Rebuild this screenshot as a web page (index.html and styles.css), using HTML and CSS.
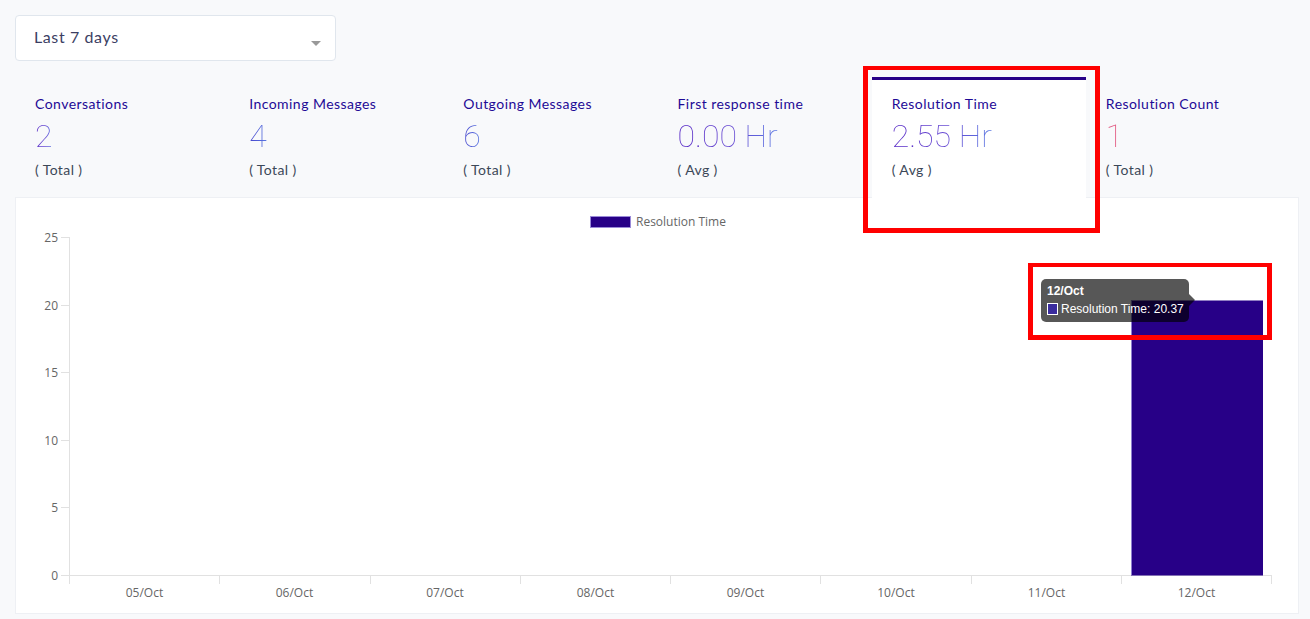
FILE: index.html
```html
<!DOCTYPE html>
<html lang="en">
<head>
<meta charset="utf-8">
<title>Reports</title>
<link rel="stylesheet" href="styles.css">
</head>
<body>
<div class="page">
  <div class="select">
    <span class="select-text">Last 7 days</span>
    <span class="caret"></span>
  </div>

  <div class="metrics">
    <div class="card">
      <div class="card-title">Conversations</div>
      <div class="card-value v-purple">2</div>
      <div class="card-sub">( Total )</div>
    </div>
    <div class="card">
      <div class="card-title">Incoming Messages</div>
      <div class="card-value v-blue">4</div>
      <div class="card-sub">( Total )</div>
    </div>
    <div class="card">
      <div class="card-title">Outgoing Messages</div>
      <div class="card-value v-blue">6</div>
      <div class="card-sub">( Total )</div>
    </div>
    <div class="card">
      <div class="card-title">First response time</div>
      <div class="card-value v-purple">0.00 Hr</div>
      <div class="card-sub">( Avg )</div>
    </div>
    <div class="card active">
      <div class="card-title">Resolution Time</div>
      <div class="card-value v-purple">2.55 Hr</div>
      <div class="card-sub">( Avg )</div>
    </div>
    <div class="card">
      <div class="card-title">Resolution Count</div>
      <div class="card-value v-pink">1</div>
      <div class="card-sub">( Total )</div>
    </div>
  </div>

  <div class="chart-panel">
    <svg class="chart" width="1284" height="417" viewBox="15 197 1284 417" xmlns="http://www.w3.org/2000/svg">
      <!-- legend -->
      <rect x="590.5" y="216.5" width="40" height="11" fill="#270087" stroke="#9a8ad8" stroke-width="1"/>
      <text x="636" y="226" class="legend-text">Resolution Time</text>

      <!-- y axis -->
      <line x1="69.5" y1="237" x2="69.5" y2="584" class="axis"/>
      <line x1="61" y1="237.5" x2="69" y2="237.5" class="axis"/>
      <line x1="61" y1="305.5" x2="69" y2="305.5" class="axis"/>
      <line x1="61" y1="372.5" x2="69" y2="372.5" class="axis"/>
      <line x1="61" y1="440.5" x2="69" y2="440.5" class="axis"/>
      <line x1="61" y1="507.5" x2="69" y2="507.5" class="axis"/>
      <line x1="61" y1="575.5" x2="69" y2="575.5" class="axis"/>
      <text x="58" y="241.5" class="tick">25</text>
      <text x="58" y="309.5" class="tick">20</text>
      <text x="58" y="376.5" class="tick">15</text>
      <text x="58" y="444.5" class="tick">10</text>
      <text x="58" y="511.5" class="tick">5</text>
      <text x="58" y="579.5" class="tick">0</text>

      <!-- x axis -->
      <line x1="69" y1="575.5" x2="1271" y2="575.5" class="axis"/>
      <line x1="219.5" y1="575" x2="219.5" y2="584" class="axis"/>
      <line x1="370.5" y1="575" x2="370.5" y2="584" class="axis"/>
      <line x1="520.5" y1="575" x2="520.5" y2="584" class="axis"/>
      <line x1="670.5" y1="575" x2="670.5" y2="584" class="axis"/>
      <line x1="820.5" y1="575" x2="820.5" y2="584" class="axis"/>
      <line x1="971.5" y1="575" x2="971.5" y2="584" class="axis"/>
      <line x1="1121.5" y1="575" x2="1121.5" y2="584" class="axis"/>
      <line x1="1271.5" y1="575" x2="1271.5" y2="584" class="axis"/>
      <text x="144.5" y="596.5" class="xtick">05/Oct</text>
      <text x="294.5" y="596.5" class="xtick">06/Oct</text>
      <text x="445" y="596.5" class="xtick">07/Oct</text>
      <text x="595.5" y="596.5" class="xtick">08/Oct</text>
      <text x="745.5" y="596.5" class="xtick">09/Oct</text>
      <text x="896" y="596.5" class="xtick">10/Oct</text>
      <text x="1046.5" y="596.5" class="xtick">11/Oct</text>
      <text x="1196.5" y="596.5" class="xtick">12/Oct</text>

      <!-- bar -->
      <rect x="1131" y="300.5" width="132" height="275" fill="#270087"/>
      <line x1="1131.5" y1="300.5" x2="1131.5" y2="575" stroke="#8f80d0" stroke-width="1"/>

      <!-- tooltip -->
      <rect x="1041" y="279" width="148" height="43" rx="5" ry="5" fill="rgba(0,0,0,0.66)"/>
      <polygon points="1189,294 1195,300 1189,306" fill="rgba(0,0,0,0.66)"/>
      <text x="1047" y="295" class="tip-title">12/Oct</text>
      <rect x="1047.5" y="303.5" width="10" height="11" fill="#3a2c9e" stroke="#ffffff" stroke-width="1"/>
      <text x="1061" y="313" class="tip-body">Resolution Time: 20.37</text>
    </svg>
  </div>

  <div class="mark mark-card"></div>
  <div class="mark mark-tip"></div>
</div>
</body>
</html>
```

FILE: styles.css
```css
html, body {
  margin: 0;
  padding: 0;
  background: #f8f9fb;
}

body {
  font-family: "Lato", "Open Sans", sans-serif;
  color: #3c4858;
}

.page {
  position: relative;
  width: 1284px;
  padding: 15px 11px 0 15px;
}

.select {
  box-sizing: border-box;
  width: 321px;
  height: 46px;
  background: #ffffff;
  border: 1px solid #e0e6ed;
  border-radius: 4px;
  display: flex;
  align-items: center;
  justify-content: space-between;
  padding: 0 14px 0 18px;
}

.select-text {
  font-size: 16px;
  letter-spacing: 0.6px;
  color: #3b3e63;
  margin-top: -3px;
}

.caret {
  width: 0;
  height: 0;
  border-left: 5px solid transparent;
  border-right: 5px solid transparent;
  border-top: 5px solid #999999;
  margin-top: 10px;
}

.metrics {
  display: flex;
  width: 1285px;
  margin-top: 16px;
}

.card {
  box-sizing: border-box;
  flex: 1 1 0;
  height: 120px;
  border-top: 3px solid transparent;
  padding: 15px 20px 0 20px;
}

.card.active {
  background: #ffffff;
  border-top-color: #270087;
  position: relative;
  z-index: 1;
  margin-bottom: -1px;
  height: 121px;
}

.card-title {
  font-size: 14px;
  line-height: 18px;
  letter-spacing: 0.45px;
  color: #1e0a96;
}

.card-value {
  font-family: "Roboto", "Lato", sans-serif;
  font-size: 32px;
  line-height: 40px;
  font-weight: 100;
  margin-top: 3px;
  display: inline-block;
  -webkit-background-clip: text;
  background-clip: text;
  color: transparent;
}

.v-purple {
  background-image: linear-gradient(90deg, #5222c4 0%, #6548d2 55%, #5a78e2 100%);
}

.v-blue {
  background-image: linear-gradient(90deg, #4644cc 0%, #5a78e2 100%);
}

.v-pink {
  background-image: linear-gradient(90deg, #e0507a 0%, #e0507a 70%, #7a8ae8 100%);
}

.card-sub {
  font-size: 14px;
  line-height: 18px;
  letter-spacing: 0.4px;
  margin-top: 5px;
  color: #3c4858;
}

.chart-panel {
  box-sizing: border-box;
  width: 1284px;
  height: 417px;
  background: #ffffff;
  border: 1px solid #eef0f4;
  overflow: hidden;
}

.chart {
  display: block;
  margin: -1px;
}

.axis {
  stroke: #e1e1e1;
  stroke-width: 1;
}

.legend-text {
  font-family: "Open Sans", "DejaVu Sans", sans-serif;
  font-size: 12px;
  fill: #666666;
}

.tick {
  font-family: "Open Sans", "DejaVu Sans", sans-serif;
  font-size: 12px;
  fill: #666666;
  text-anchor: end;
}

.xtick {
  font-family: "Open Sans", "DejaVu Sans", sans-serif;
  font-size: 12px;
  fill: #666666;
  text-anchor: middle;
}

.tip-title {
  font-family: "Liberation Sans", Arial, sans-serif;
  font-size: 12px;
  font-weight: bold;
  fill: #ffffff;
}

.tip-body {
  font-family: "Liberation Sans", Arial, sans-serif;
  font-size: 12px;
  fill: #ffffff;
}

.mark {
  position: absolute;
  box-sizing: border-box;
  border: 5px solid #ff0000;
  border-top-width: 4px;
  border-bottom-width: 5px;
}

.mark-card {
  left: 863px;
  top: 66px;
  width: 237px;
  height: 167px;
}

.mark-tip {
  left: 1028px;
  top: 263px;
  width: 244px;
  height: 77px;
}
```
